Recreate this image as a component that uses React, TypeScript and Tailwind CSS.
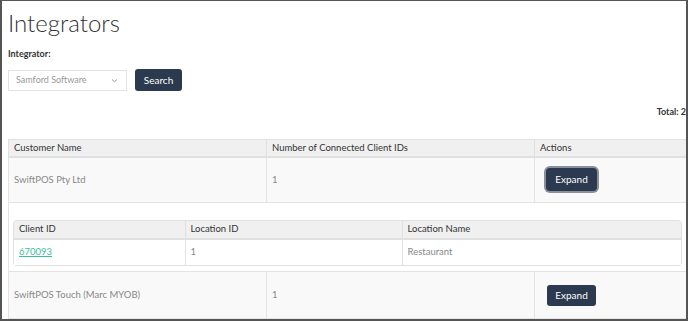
import React from "react";

const font = { fontFamily: "Lato, 'Open Sans', sans-serif" };

function ExpandBtn({ focused }: { focused?: boolean }) {
  return (
    <button
      className={
        "h-[21px] w-[49px] rounded-[3px] bg-[#2b3a4e] text-[10px] text-white " +
        (focused ? "ring-2 ring-[#8a9099] ring-offset-1 ring-offset-[#2b3a4e]" : "")
      }
    >
      Expand
    </button>
  );
}

export default function App() {
  return (
    <div
      className="w-[688px] h-[321px] overflow-hidden border-t border-l-2 border-r-2 border-b-2 border-[#555] bg-white"
      style={font}
    >
      <div className="pl-[6px] pr-0">
        <h1 className="pt-[8px] text-[24px] leading-[28px] font-light text-[#333]">Integrators</h1>
        <div className="mt-[11px] text-[9px] font-bold text-[#333] leading-[12px]">Integrator:</div>
        <div className="mt-[9px] flex items-center gap-[8px]">
          <div className="flex h-[21px] w-[119px] items-center justify-between border border-[#e3e3e3] bg-white pl-[7px] pr-[8px]">
            <span className="text-[9px] text-[#999]">Samford Software</span>
            <svg width="7" height="5" viewBox="0 0 7 5">
              <path d="M1 1.5 L3.5 3.8 L6 1.5" stroke="#888" strokeWidth="0.9" fill="none" />
            </svg>
          </div>
          <button className="h-[22px] w-[47px] rounded-[3px] bg-[#2b3a4e] text-[10px] text-white">Search</button>
        </div>
        <div className="mt-[14px] text-right text-[9px] font-bold text-[#333] leading-[14px] pr-[0px]">
          Total: 2
        </div>
        <table className="mt-[20px] w-[679px] border-collapse text-[9.5px]">
          <colgroup>
            <col className="w-[258px]" />
            <col className="w-[268px]" />
            <col />
          </colgroup>
          <thead>
            <tr className="h-[17px] bg-[#f0f0f0] text-[#333]">
              <th className="border border-[#e0e0e0] border-b-2 pl-[5px] text-left font-normal">Customer Name</th>
              <th className="border border-[#e0e0e0] border-b-2 pl-[5px] text-left font-normal">Number of Connected Client IDs</th>
              <th className="border border-[#e0e0e0] border-b-2 pl-[5px] text-left font-normal">Actions</th>
            </tr>
          </thead>
          <tbody>
            <tr className="h-[46px] bg-[#f9f9f9] text-[#888]">
              <td className="border border-[#e3e3e3] pl-[5px]">SwiftPOS Pty Ltd</td>
              <td className="border border-[#e3e3e3] pl-[5px]">1</td>
              <td className="border border-[#e3e3e3] pl-[12px]">
                <ExpandBtn focused />
              </td>
            </tr>
            <tr className="h-[69px] bg-white">
              <td colSpan={3} className="border border-[#e3e3e3] px-[5px] pt-[18px] pb-[5px] align-top">
                <table className="w-full border-collapse text-[9.5px] rounded-[3px] shadow-[0_0_0_1px_#e0e0e0]">
                  <colgroup>
                    <col className="w-[171px]" />
                    <col className="w-[217px]" />
                    <col />
                  </colgroup>
                  <thead>
                    <tr className="h-[18px] bg-[#f0f0f0] text-[#333]">
                      <th className="border-r border-b-2 border-[#e0e0e0] pl-[5px] text-left font-normal">Client ID</th>
                      <th className="border-r border-b-2 border-[#e0e0e0] pl-[5px] text-left font-normal">Location ID</th>
                      <th className="border-b-2 border-[#e0e0e0] pl-[5px] text-left font-normal">Location Name</th>
                    </tr>
                  </thead>
                  <tbody>
                    <tr className="h-[26px] bg-white text-[#888]">
                      <td className="border-r border-[#e3e3e3] pl-[5px]">
                        <a className="text-[#3bbf9c] underline">670093</a>
                      </td>
                      <td className="border-r border-[#e3e3e3] pl-[5px]">1</td>
                      <td className="pl-[5px]">Restaurant</td>
                    </tr>
                  </tbody>
                </table>
              </td>
            </tr>
            <tr className="h-[47px] bg-[#f9f9f9] text-[#888]">
              <td className="border border-[#e3e3e3] pl-[5px]">SwiftPOS Touch (Marc MYOB)</td>
              <td className="border border-[#e3e3e3] pl-[5px]">1</td>
              <td className="border border-[#e3e3e3] pl-[12px]">
                <ExpandBtn />
              </td>
            </tr>
          </tbody>
        </table>
      </div>
    </div>
  );
}
